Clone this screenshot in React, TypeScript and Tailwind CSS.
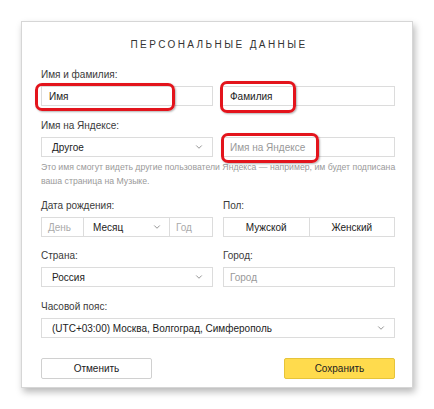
import { ChevronDown } from "lucide-react";

const font = { fontFamily: '"Liberation Sans", Arial, sans-serif' };

function Label({ children }: { children: React.ReactNode }) {
  return <div className="text-[10px] leading-[12px] text-[#3a3a3a] mb-[5px]">{children}</div>;
}

function Box({
  children,
  className = "",
}: {
  children?: React.ReactNode;
  className?: string;
}) {
  return (
    <div
      className={`h-[20px] border border-[#dcdcdc] bg-white flex items-center text-[10px] ${className}`}
    >
      {children}
    </div>
  );
}

function Chevron() {
  return <ChevronDown className="w-[10px] h-[10px] text-[#555]" strokeWidth={1.5} />;
}

// red markers drawn over the screenshot
const marks = [
  { l: 35, t: 83, w: 140, h: 28 },
  { l: 220, t: 81, w: 76, h: 32 },
  { l: 221, t: 133, w: 98, h: 30 },
];

export default function App() {
  return (
    <div className="relative w-[434px] h-[409px] bg-white pt-[21px] pl-[21px]" style={font}>
      <div className="w-[392px] h-[367px] border border-[#d6d6d6] bg-white shadow-[2px_4px_7px_rgba(0,0,0,0.28)] pl-[19px] pr-[17px] pt-[16px]">
        <h1 className="text-center text-[10px] leading-[14px] tracking-[2.4px] text-[#333] pl-[2px]">
          ПЕРСОНАЛЬНЫЕ ДАННЫЕ
        </h1>

        <div className="mt-[17px]">
          <Label>Имя и фамилия:</Label>
          <div className="grid grid-cols-[172px_174px] gap-x-[8px]">
            <Box className="pl-[7px] text-[#222]">Имя</Box>
            <Box className="pl-[8px] text-[#222]">Фамилия</Box>
          </div>
        </div>

        <div className="mt-[14px]">
          <Label>Имя на Яндексе:</Label>
          <div className="grid grid-cols-[172px_174px] gap-x-[8px]">
            <Box className="pl-[10px] pr-[8px] justify-between text-[#222]">
              <span>Другое</span>
              <Chevron />
            </Box>
            <Box className="pl-[8px] text-[#999]">Имя на Яндексе</Box>
          </div>
          <p className="mt-[3px] text-[8.7px] leading-[14px] text-[#9a9a9a] whitespace-nowrap">
            Это имя смогут видеть другие пользователи Яндекса — например, им будет подписана
            <br />
            ваша страница на Музыке.
          </p>
        </div>

        <div className="mt-[12px] grid grid-cols-[172px_172px] gap-x-[10px]">
          <div>
            <Label>Дата рождения:</Label>
            <div className="flex h-[20px] border border-[#dcdcdc] text-[10px]">
              <div className="w-[42px] pl-[6px] flex items-center text-[#aaa] border-r border-[#dcdcdc]">
                День
              </div>
              <div className="w-[86px] pl-[9px] pr-[7px] flex items-center justify-between text-[#222] border-r border-[#dcdcdc]">
                <span>Месяц</span>
                <Chevron />
              </div>
              <div className="flex-1 pl-[6px] flex items-center text-[#aaa]">Год</div>
            </div>
          </div>
          <div>
            <Label>Пол:</Label>
            <div className="flex h-[20px] border border-[#dcdcdc] text-[10px] text-[#222]">
              <div className="flex-1 flex items-center justify-center border-r border-[#dcdcdc]">
                Мужской
              </div>
              <div className="flex-1 flex items-center justify-center">Женский</div>
            </div>
          </div>
        </div>

        <div className="mt-[13px] grid grid-cols-[172px_172px] gap-x-[10px]">
          <div>
            <Label>Страна:</Label>
            <Box className="pl-[10px] pr-[8px] justify-between text-[#222]">
              <span>Россия</span>
              <Chevron />
            </Box>
          </div>
          <div>
            <Label>Город:</Label>
            <Box className="pl-[6px] text-[#999]">Город</Box>
          </div>
        </div>

        <div className="mt-[14px]">
          <Label>Часовой пояс:</Label>
          <Box className="pl-[10px] pr-[8px] justify-between text-[#222]">
            <span>(UTC+03:00) Москва, Волгоград, Симферополь</span>
            <Chevron />
          </Box>
        </div>

        <div className="mt-[20px] flex justify-between">
          <button className="w-[111px] h-[21px] border border-[#d0d0d0] rounded-[2px] bg-white text-[10px] text-[#222]">
            Отменить
          </button>
          <button className="w-[111px] h-[21px] border border-[#e6c43a] rounded-[2px] bg-[#ffdb4d] text-[10px] text-[#222]">
            Сохранить
          </button>
        </div>
      </div>

      {marks.map((m, i) => (
        <div
          key={i}
          className="absolute border-[3px] border-[#e3141c] rounded-[7px] shadow-[1px_1px_2px_rgba(0,0,0,0.3)]"
          style={{ left: m.l, top: m.t, width: m.w, height: m.h }}
        />
      ))}
    </div>
  );
}
